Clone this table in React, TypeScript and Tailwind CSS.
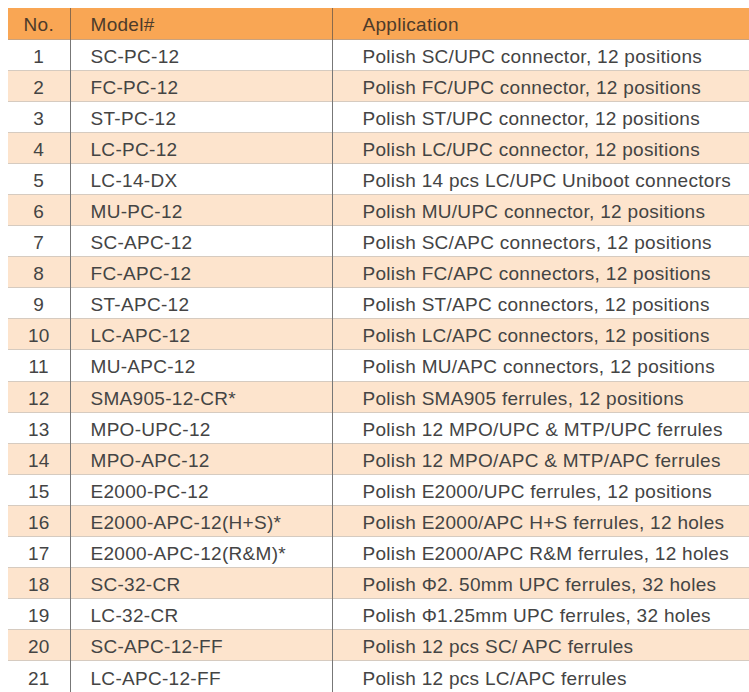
import React from 'react';

const rows: [string, string][] = [
  ['SC-PC-12', 'Polish SC/UPC connector, 12 positions'],
  ['FC-PC-12', 'Polish FC/UPC connector, 12 positions'],
  ['ST-PC-12', 'Polish ST/UPC connector, 12 positions'],
  ['LC-PC-12', 'Polish LC/UPC connector, 12 positions'],
  ['LC-14-DX', 'Polish 14 pcs LC/UPC Uniboot connectors'],
  ['MU-PC-12', 'Polish MU/UPC connector, 12 positions'],
  ['SC-APC-12', 'Polish SC/APC connectors, 12 positions'],
  ['FC-APC-12', 'Polish FC/APC connectors, 12  positions'],
  ['ST-APC-12', 'Polish ST/APC connectors, 12 positions'],
  ['LC-APC-12', 'Polish LC/APC connectors, 12 positions'],
  ['MU-APC-12', 'Polish MU/APC connectors, 12 positions'],
  ['SMA905-12-CR*', 'Polish SMA905 ferrules, 12 positions'],
  ['MPO-UPC-12', 'Polish 12 MPO/UPC & MTP/UPC ferrules'],
  ['MPO-APC-12', 'Polish 12 MPO/APC & MTP/APC ferrules'],
  ['E2000-PC-12', 'Polish E2000/UPC ferrules, 12 positions'],
  ['E2000-APC-12(H+S)*', 'Polish E2000/APC H+S ferrules, 12 holes'],
  ['E2000-APC-12(R&M)*', 'Polish E2000/APC R&M ferrules, 12 holes'],
  ['SC-32-CR', 'Polish Φ2. 50mm UPC ferrules, 32 holes'],
  ['LC-32-CR', 'Polish Φ1.25mm UPC ferrules, 32 holes'],
  ['SC-APC-12-FF', 'Polish 12 pcs SC/ APC ferrules'],
  ['LC-APC-12-FF', 'Polish 12 pcs LC/APC ferrules'],
];

export default function App() {
  return (
    <div className="w-[749px] h-[692px] overflow-hidden bg-white pl-2 pt-2 font-['Liberation_Sans',Arial,sans-serif]">
      <table className="w-[741px] table-fixed border-collapse text-[19px] tracking-[0.3px] leading-none text-[#444]">
        <colgroup>
          <col className="w-[62px]" />
          <col className="w-[262px]" />
          <col />
        </colgroup>
        <thead>
          <tr className="h-[31px] bg-[#f9a654] text-[#4d3b2a] border-b border-[#c9a27e]">
            <th className="font-normal text-center border-r border-[#8a6a4c] pt-[2px]">No.</th>
            <th className="font-normal text-left pl-[20px] border-r border-[#8a6a4c] pt-[2px]">Model#</th>
            <th className="font-normal text-left pl-[30px] pt-[2px]">Application</th>
          </tr>
        </thead>
        <tbody>
          {rows.map(([model, app], i) => (
            <tr
              key={model}
              className={
                i % 2 === 1
                  ? 'h-[31.1px] bg-[#fde4cd] border-y border-[#d6cbc0]'
                  : 'h-[31.1px] bg-white'
              }
            >
              <td className="text-center border-r border-[#777] pt-[3px]">{i + 1}</td>
              <td className="pl-[20px] border-r border-[#777] pt-[3px] whitespace-nowrap">{model}</td>
              <td className="pl-[30px] pt-[3px] whitespace-nowrap">{app}</td>
            </tr>
          ))}
        </tbody>
      </table>
    </div>
  );
}
